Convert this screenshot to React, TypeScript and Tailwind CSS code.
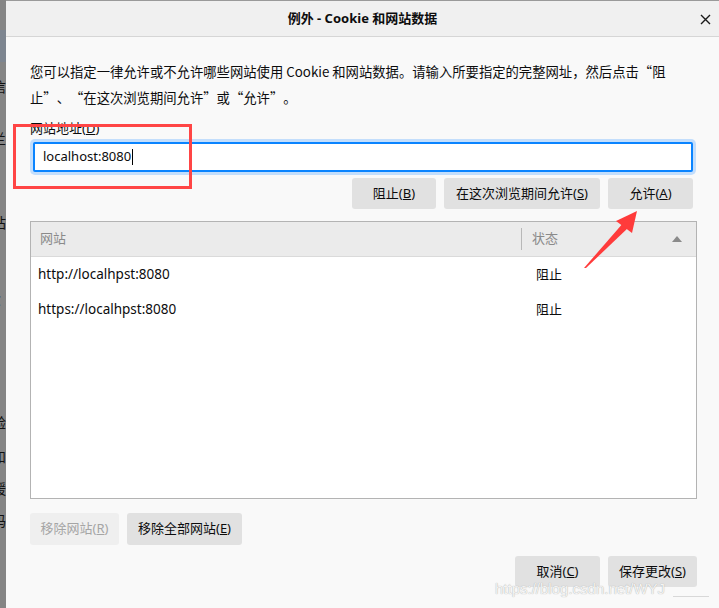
import React from "react";

const Btn = ({ w, children, disabled }: { w: string; children: React.ReactNode; disabled?: boolean }) => (
  <div
    className={`flex items-center justify-center rounded-[3px] ${w} ${
      disabled ? "bg-[#efefef] text-[#a5a5a5]" : "bg-[#e1e1e1] text-[#0c0c0d]"
    }`}
  >
    {children}
  </div>
);

const LQ = () => <span className="inline-block w-[1em] text-right">“</span>;
const RQ = () => <span className="inline-block w-[1em] text-left">”</span>;

export default function App() {
  return (
    <div
      className="relative flex h-[608px] w-[719px] overflow-hidden bg-[#f9f9f9] text-[13px] text-[#0c0c0d]"
      style={{ fontFamily: '"Noto Sans", "Noto Sans CJK SC", sans-serif' }}
    >
      {/* background window strip */}
      <div className="flex w-[6px] shrink-0 flex-col overflow-hidden bg-[#858585] text-[14px] leading-none text-[#111]">
        <div className="h-[30px] bg-[#858585]" />
        <div className="h-[32px] bg-[#7d8590]" />
        <div className="ml-[-8px] mt-[18px]">信</div>
        <div className="ml-[-8px] mt-[38px]">兰</div>
        <div className="ml-[-8px] mt-[70px]">站</div>
        <div className="ml-[-8px] mt-[64px]">C</div>
        <div className="ml-[-8px] mt-[108px]">验</div>
        <div className="ml-[-8px] mt-[20px]">和</div>
        <div className="ml-[-8px] mt-[18px]">缓</div>
        <div className="ml-[-8px] mt-[18px]">码</div>
      </div>

      <div className="flex flex-1 flex-col">
        {/* title bar */}
        <div className="relative flex h-[37px] shrink-0 items-center justify-center border-t border-b border-t-[#9a9a9a] border-b-[#d6d6d6] bg-[#f0f0f0]">
          <span className="text-[13px] font-bold">例外 - Cookie 和网站数据</span>
          <svg className="absolute right-[8px] top-[13px]" width="11" height="11" viewBox="0 0 11 11">
            <path d="M1 1 L10 10 M10 1 L1 10" stroke="#1a1a1a" strokeWidth="1.4" />
          </svg>
        </div>

        <div className="flex flex-col pl-[24px] pr-[22px] pt-[22px]">
          <p
            className="whitespace-nowrap text-[13.33px] leading-[26px]"
            style={{ fontFamily: '"Noto Sans CJK SC", "Noto Sans", sans-serif' }}
          >
            您可以指定一律允许或不允许哪些网站使用 Cookie 和网站数据。请输入所要指定的完整网址，然后点击
            <LQ />阻
            <br />
            止<RQ />、<LQ />在这次浏览期间允许<RQ />或<LQ />允许<RQ />。
          </p>
          <div className="mt-[8px] leading-[18px]">
            网站地址(<u>D</u>)
          </div>

          <div className="pl-[3px] pr-[4px]">
            <div className="mt-[5px] flex h-[30px] items-center rounded-[2px] border-2 border-[#0a84ff] bg-white pl-[8px] shadow-[0_0_0_3px_#c3defc]">
              localhost:8080
              <span className="ml-[1px] h-[16px] w-px bg-black" />
            </div>
            <div className="mt-[6px] flex h-[31px] justify-end gap-[8px]">
              <Btn w="w-[84px]">
                阻止(<u>B</u>)
              </Btn>
              <Btn w="w-[156px]">
                在这次浏览期间允许(<u>S</u>)
              </Btn>
              <Btn w="w-[85px]">
                允许(<u>A</u>)
              </Btn>
            </div>
          </div>

          {/* table */}
          <div className="mt-[12px] flex h-[278px] flex-col border border-[#b3b3b3] bg-white">
            <div className="flex h-[35px] shrink-0 items-center border-b border-[#dadada] bg-[#ebebeb] text-[#8a8a8a]">
              <div className="w-[490px] pl-[9px]">网站</div>
              <div className="h-[22px] w-px bg-[#b8b8b8]" />
              <div className="flex flex-1 items-center justify-between pl-[10px] pr-[14px]">
                <span>状态</span>
                <svg width="10" height="6" viewBox="0 0 10 6">
                  <path d="M0 6 L5 0 L10 6 Z" fill="#8a8a8a" />
                </svg>
              </div>
            </div>
            <div className="flex h-[35px] items-center">
              <div className="w-[491px] pl-[7px] text-[13.5px]">http://localhpst:8080</div>
              <div className="pl-[14px]">阻止</div>
            </div>
            <div className="flex h-[35px] items-center">
              <div className="w-[491px] pl-[7px] text-[13.5px]">https://localhpst:8080</div>
              <div className="pl-[14px]">阻止</div>
            </div>
          </div>

          <div className="mt-[14px] flex h-[32px] gap-[8px]">
            <Btn w="w-[89px]" disabled>
              移除网站(<u>R</u>)
            </Btn>
            <Btn w="w-[115px]">
              移除全部网站(<u>E</u>)
            </Btn>
          </div>

          <div className="mt-[11px] flex h-[31px] justify-end gap-[8px]">
            <Btn w="w-[85px]">
              取消(<u>C</u>)
            </Btn>
            <Btn w="w-[89px]">
              保存更改(<u>S</u>)
            </Btn>
          </div>
        </div>
      </div>

      {/* annotation: red rectangle */}
      <div className="absolute left-[13px] top-[124px] h-[65px] w-[179px] border-[3px] border-[#ff4545]" />

      {/* annotation: red arrow */}
      <svg className="absolute left-0 top-0" width="719" height="608" viewBox="0 0 719 608">
        <polygon points="584,268 586,268 629,227 624,222" fill="#ff3b3b" />
        <polygon points="637,211 616,221 632,233" fill="#ff3b3b" />
      </svg>

      {/* watermark */}
      <div
        className="absolute left-[495px] top-[580px] text-[15px] leading-[18px] text-[#f4f4f4] [text-shadow:0_0_1px_#9a9a9a]"
        style={{ fontFamily: '"Liberation Sans", Arial, sans-serif' }}
      >
        https://blog.csdn.net/WYJ
      </div>
      <div className="absolute left-[673px] top-[596px] h-px w-[36px] bg-[#d8d8d8]" />
    </div>
  );
}
